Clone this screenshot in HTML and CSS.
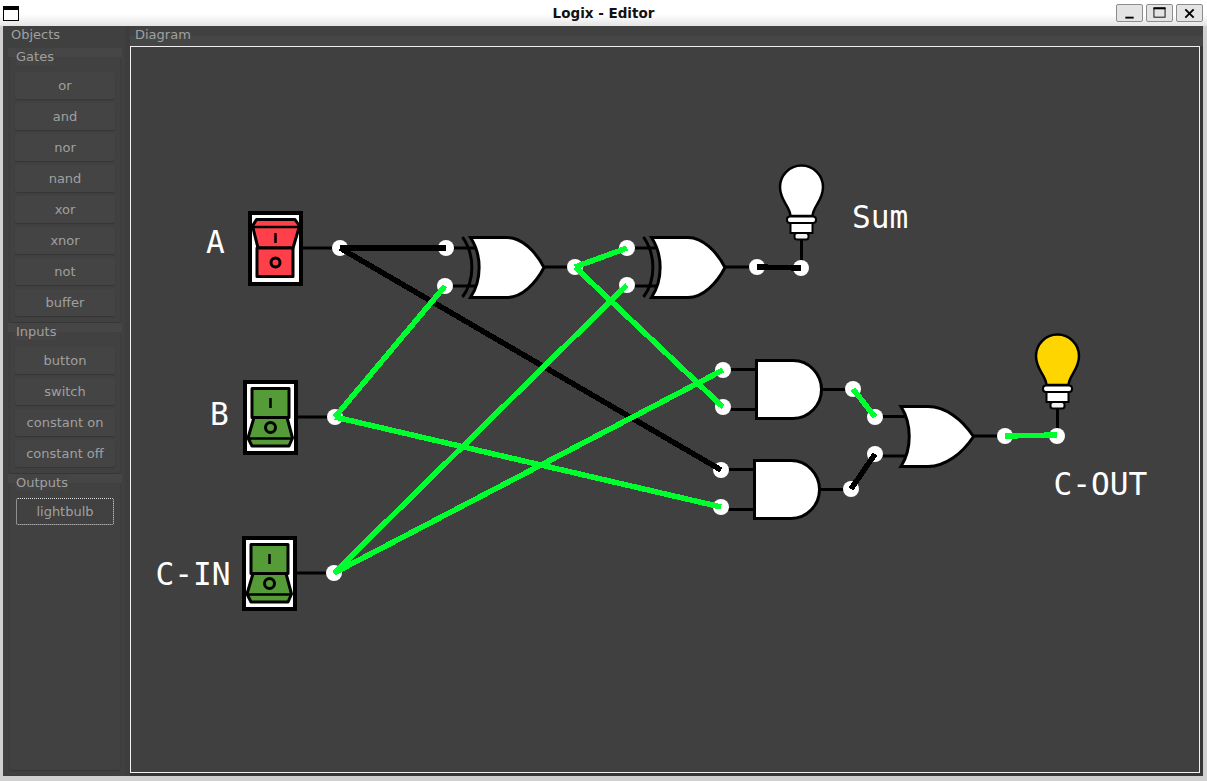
FILE: index.html
```html
<!DOCTYPE html>
<html lang="en">
<head>
    <meta charset="UTF-8">
    <title>Logix - Editor</title>
    <link rel="stylesheet" href="styles.css">
</head>
<body>

    <header class="titlebar">
        <div class="app-icon"></div>
        <div class="title">Logix - Editor</div>
        <div class="window-buttons">
            <div class="win-btn">
                <svg width="27" height="18" viewBox="0 0 27 18"><rect x="9" y="13" width="9" height="2" fill="#000"/></svg>
            </div>
            <div class="win-btn">
                <svg width="27" height="18" viewBox="0 0 27 18"><rect x="7.5" y="3.5" width="12" height="10" fill="none" stroke="#000"/><rect x="7" y="3" width="13" height="2" fill="#000"/></svg>
            </div>
            <div class="win-btn">
                <svg width="27" height="18" viewBox="0 0 27 18"><path d="M9 5l9 9M18 5l-9 9" stroke="#000" stroke-width="2" fill="none"/></svg>
            </div>
        </div>
    </header>

    <main class="window">
        <aside class="objects">
            <div class="pane-title">Objects</div>

            <div class="group-title"><span>Gates</span></div>
            <div class="group">
                <button type="button">or</button>
                <button type="button">and</button>
                <button type="button">nor</button>
                <button type="button">nand</button>
                <button type="button">xor</button>
                <button type="button">xnor</button>
                <button type="button">not</button>
                <button type="button">buffer</button>
            </div>

            <div class="group-title"><span>Inputs</span></div>
            <div class="group">
                <button type="button">button</button>
                <button type="button">switch</button>
                <button type="button">constant on</button>
                <button type="button">constant off</button>
            </div>

            <div class="group-title"><span>Outputs</span></div>
            <div class="group group-last">
                <button type="button" class="focused">lightbulb</button>
            </div>
        </aside>

        <section class="diagram">
            <div class="pane-title">Diagram</div>
            <div class="canvas">
                <svg class="schematic" width="1068" height="725" viewBox="131 47 1068 725">
                    <defs>
                        <g id="xor">
                            <path class="stub" d="M446 248H477M445 286H477M544 267H575"/>
                            <path class="back" d="M462.5 237C475 255 475 280 462.5 297"/>
                            <path class="body" d="M470.5 237.5C482 255 482 280 470.5 297.5H507C522 297.500 536 283 544 267.500C536 252 522 237.500 507 237.500Z"/>
                        </g>
                        <g id="and">
                            <path class="stub" d="M723 369.500H756M723 409.500H756M821 389.500H853"/>
                            <path class="body" d="M756.500 360.500V418.500H793C809 418.500 821.500 405 821.500 389.500C821.500 374 809 360.500 793 360.500Z"/>
                        </g>
                        <g id="bulb">
                            <path class="stub" d="M801.500 239V268"/>
                            <path class="glass" d="M790.500 216C790 206 780 201 780 187A21.500 21.500 0 0 1 823 187C823 201 813 206 812.500 216Z"/>
                            <rect class="socket" x="790.500" y="222" width="22" height="11"/>
                            <rect class="socket tip" x="794.500" y="233" width="14" height="6.500" rx="2.500"/>
                            <rect class="socket" x="787" y="216.500" width="29" height="6.500" rx="3"/>
                        </g>
                        <circle id="pin" r="8"/>
                    </defs>

                    <path class="stub" d="M303 248H340M298 417H335M297 573H334"/>

                    <!-- A, switched on -->
                    <rect class="frame" x="250" y="213" width="51" height="71"/>
                    <path class="rocker on" d="M256.500 219.500H295L299.500 226 293 248H258L252.500 226Z"/>
                    <path class="rocker on" d="M257 248H293V276.500H257Z"/>
                    <path class="mark" d="M252.500 227H299.500M275.500 233V243"/>
                    <circle class="rocker on" cx="275.500" cy="262.500" r="4.500"/>

                    <!-- B and C-IN, switched off -->
                    <g id="switch-off">
                        <rect class="frame" x="245" y="382" width="51" height="71"/>
                        <path class="rocker off" d="M252 388.500H289V417.500H252Z"/>
                        <path class="rocker off" d="M254 417.500H287L292.500 438 289 446H252L248 438Z"/>
                        <path class="mark" d="M248 438.500H292.500M270.500 398V408"/>
                        <circle class="rocker off" cx="270.500" cy="427.500" r="5"/>
                    </g>
                    <use href="#switch-off" x="-1" y="156"/>

                    <use href="#xor"/>
                    <use href="#xor" x="181"/>
                    <use href="#and"/>
                    <use href="#and" x="-2" y="100"/>

                    <path class="stub" d="M875 416.500H908M875 456H908M973 436H1005"/>
                    <path class="body" d="M901 406.500C912 424 912 449 901 466.500H928C945 466.500 962 454 973.500 436.500C962 419 945 406.500 928 406.500Z"/>

                    <use href="#bulb" class="bulb-off"/>
                    <use href="#bulb" class="bulb-on" x="256" y="169"/>

                    <g class="pins">
                        <use href="#pin" x="340" y="248"/>
                        <use href="#pin" x="335" y="417"/>
                        <use href="#pin" x="334" y="573"/>
                        <use href="#pin" x="446" y="248"/>
                        <use href="#pin" x="445" y="286"/>
                        <use href="#pin" x="575" y="267"/>
                        <use href="#pin" x="627" y="248"/>
                        <use href="#pin" x="627" y="285"/>
                        <use href="#pin" x="757" y="267"/>
                        <use href="#pin" x="801" y="268"/>
                        <use href="#pin" x="723" y="370"/>
                        <use href="#pin" x="723" y="407"/>
                        <use href="#pin" x="721" y="470"/>
                        <use href="#pin" x="721" y="507"/>
                        <use href="#pin" x="853" y="389"/>
                        <use href="#pin" x="851" y="489"/>
                        <use href="#pin" x="875" y="417"/>
                        <use href="#pin" x="875" y="454"/>
                        <use href="#pin" x="1005" y="436"/>
                        <use href="#pin" x="1057" y="436"/>
                    </g>

                    <g class="wire wire-low">
                        <path d="M340 248H446"/>
                        <path d="M340 248L721 470"/>
                        <path d="M757 267L801 268"/>
                        <path d="M851 489L875 454"/>
                    </g>
                    <g class="wire wire-high">
                        <path d="M335 417L445 286"/>
                        <path d="M335 417L721 507"/>
                        <path d="M334 573L627 285"/>
                        <path d="M334 573L723 370"/>
                        <path d="M575 267L627 248"/>
                        <path d="M575 267L723 407"/>
                        <path d="M853 389L875 417"/>
                        <path d="M1005 436L1057 435"/>
                    </g>

                    <text class="label" x="206" y="253">A</text>
                    <text class="label" x="210" y="425">B</text>
                    <text class="label" x="155.500" y="585">C-IN</text>
                    <text class="label" x="852" y="228">Sum</text>
                    <text class="label" x="1053.500" y="495">C-OUT</text>
                </svg>
            </div>
        </section>
    </main>

</body>
</html>
```

FILE: styles.css
```css
html, body {
    margin: 0;
    height: 781px;
    overflow: hidden;
}

body {
    background-color: #d0d0d0;
    font-family: "DejaVu Sans", sans-serif;
    font-size: 13px;
}

.titlebar {
    height: 26px;
    box-sizing: border-box;
    padding: 4px 4px 0 3px;
    display: flex;
    justify-content: space-between;
    background: linear-gradient(#ffffff 55%, #e4e4e4);
    position: relative;
}

.app-icon {
    width: 16px;
    height: 15px;
    margin-top: 2px;
    box-sizing: border-box;
    border: 1px solid #000;
    border-top-width: 4px;
    background-color: #fff;
}

.title {
    position: absolute;
    left: 0;
    right: 0;
    top: 5px;
    text-align: center;
    font-size: 13.5px;
    font-weight: bold;
    color: #111;
}

.window-buttons {
    display: flex;
    gap: 3px;
}

.win-btn {
    width: 27px;
    height: 18px;
    box-sizing: border-box;
    border: 1px solid #8c8c8c;
    border-radius: 2px;
    background-color: #e4e4e4;
    display: flex;
    align-items: center;
    justify-content: center;
}

.window {
    margin-left: 3px;
    width: 1200px;
    height: 750px;
    background-color: #3d3d3d;
    display: flex;
    color: #a0a0a0;
}

.pane-title {
    height: 16px;
    line-height: 17px;
    padding-left: 8px;
    color: #a0a0a0;
}

.objects {
    width: 122px;
    box-sizing: border-box;
    background-color: #404040;
    display: flex;
    flex-direction: column;
    margin-bottom: 1px;
}

.group-title {
    height: 9px;
    line-height: 17px;
    margin: 1px 3px 0 5px;
    padding-left: 8px;
    background-color: #464646;
    z-index: 1;
}

.pane-title + .group-title {
    margin-top: 6px;
}

.group-title span {
    display: inline-block;
    background-color: #444444;
    height: 17px;
    vertical-align: top;
}

.group {
    margin: 0 5px 0 7px;
    padding: 15px 5px 6px;
    display: flex;
    flex-direction: column;
    gap: 4px;
    background-color: #414141;
    box-shadow: 0 1px 1px #363636, 0 0 2px #3a3a3a;
    border-radius: 2px;
}

.group-last {
    flex: 1;
    margin-bottom: 5px;
}

button {
    height: 27px;
    padding: 0;
    border: none;
    border-radius: 2px;
    background-color: #444444;
    box-shadow: 0 1px 1px #363636;
    color: #a0a0a0;
    font-family: inherit;
    font-size: 13px;
}

button.focused {
    margin: 0 1px;
    box-sizing: border-box;
    border: 1px dotted #e0e0e0;
    box-shadow: none;
    background-color: #414141;
}

.diagram {
    flex: 1;
    margin-left: 5px;
    display: flex;
    flex-direction: column;
    background-color: #363636;
}

.diagram .pane-title {
    height: 20px;
    padding-left: 5px;
    background: linear-gradient(#414141 10px, #464646 10px);
}

.canvas {
    width: 1070px;
    height: 727px;
    box-sizing: border-box;
    border: 1px solid #f0f0f0;
    background-color: #404040;
}

.schematic {
    display: block;
}

.stub {
    fill: none;
    stroke: #000;
    stroke-width: 3;
}

.body, .back {
    stroke: #000;
    stroke-width: 3;
    stroke-linejoin: miter;
}

.body {
    fill: #fff;
}

.back {
    fill: none;
}

.glass {
    stroke: #000;
    stroke-width: 2.5;
}

.bulb-off {
    fill: #fff;
}

.bulb-on {
    fill: #ffd500;
}

.socket {
    fill: #fff;
    stroke: #000;
    stroke-width: 2;
}

.tip {
    fill: #f0f0f0;
}

.frame {
    fill: #fff;
    stroke: #000;
    stroke-width: 4;
}

.rocker {
    stroke: #000;
    stroke-width: 3;
    stroke-linejoin: round;
}

.rocker.on {
    fill: #ff3f4a;
}

.rocker.off {
    fill: #559b37;
}

.mark {
    fill: none;
    stroke: #000;
    stroke-width: 2.5;
}

.pins {
    fill: #fff;
}

.wire path {
    fill: none;
    stroke-width: 5.5;
    stroke-linecap: butt;
    shape-rendering: crispEdges;
}

.wire-low path {
    stroke: #000;
}

.wire-high path {
    stroke: #00ff2e;
}

.label {
    font-family: "DejaVu Sans Mono", monospace;
    font-size: 31.2px;
    fill: #fff;
}
```
